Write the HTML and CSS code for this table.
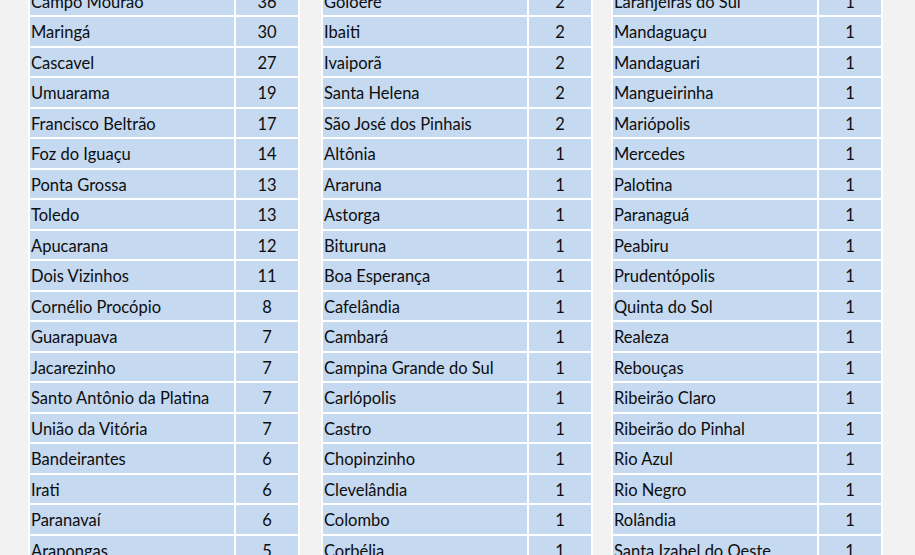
FILE: index.html
```html
<!DOCTYPE html>
<html lang="pt-BR">
<head>
<meta charset="utf-8">
<title>Municípios</title>
<link rel="stylesheet" href="styles.css">
</head>
<body>
<main class="sheet">
  <table class="grid grid-1">
    <tbody>
      <tr><td class="name">Campo Mourão</td><td class="num">36</td></tr>
      <tr><td class="name">Maringá</td><td class="num">30</td></tr>
      <tr><td class="name">Cascavel</td><td class="num">27</td></tr>
      <tr><td class="name">Umuarama</td><td class="num">19</td></tr>
      <tr><td class="name">Francisco Beltrão</td><td class="num">17</td></tr>
      <tr><td class="name">Foz do Iguaçu</td><td class="num">14</td></tr>
      <tr><td class="name">Ponta Grossa</td><td class="num">13</td></tr>
      <tr><td class="name">Toledo</td><td class="num">13</td></tr>
      <tr><td class="name">Apucarana</td><td class="num">12</td></tr>
      <tr><td class="name">Dois Vizinhos</td><td class="num">11</td></tr>
      <tr><td class="name">Cornélio Procópio</td><td class="num">8</td></tr>
      <tr><td class="name">Guarapuava</td><td class="num">7</td></tr>
      <tr><td class="name">Jacarezinho</td><td class="num">7</td></tr>
      <tr><td class="name">Santo Antônio da Platina</td><td class="num">7</td></tr>
      <tr><td class="name">União da Vitória</td><td class="num">7</td></tr>
      <tr><td class="name">Bandeirantes</td><td class="num">6</td></tr>
      <tr><td class="name">Irati</td><td class="num">6</td></tr>
      <tr><td class="name">Paranavaí</td><td class="num">6</td></tr>
      <tr><td class="name">Arapongas</td><td class="num">5</td></tr>
    </tbody>
  </table>
  <table class="grid grid-2">
    <tbody>
      <tr><td class="name">Goioerê</td><td class="num">2</td></tr>
      <tr><td class="name">Ibaiti</td><td class="num">2</td></tr>
      <tr><td class="name">Ivaiporã</td><td class="num">2</td></tr>
      <tr><td class="name">Santa Helena</td><td class="num">2</td></tr>
      <tr><td class="name">São José dos Pinhais</td><td class="num">2</td></tr>
      <tr><td class="name">Altônia</td><td class="num">1</td></tr>
      <tr><td class="name">Araruna</td><td class="num">1</td></tr>
      <tr><td class="name">Astorga</td><td class="num">1</td></tr>
      <tr><td class="name">Bituruna</td><td class="num">1</td></tr>
      <tr><td class="name">Boa Esperança</td><td class="num">1</td></tr>
      <tr><td class="name">Cafelândia</td><td class="num">1</td></tr>
      <tr><td class="name">Cambará</td><td class="num">1</td></tr>
      <tr><td class="name">Campina Grande do Sul</td><td class="num">1</td></tr>
      <tr><td class="name">Carlópolis</td><td class="num">1</td></tr>
      <tr><td class="name">Castro</td><td class="num">1</td></tr>
      <tr><td class="name">Chopinzinho</td><td class="num">1</td></tr>
      <tr><td class="name">Clevelândia</td><td class="num">1</td></tr>
      <tr><td class="name">Colombo</td><td class="num">1</td></tr>
      <tr><td class="name">Corbélia</td><td class="num">1</td></tr>
    </tbody>
  </table>
  <table class="grid grid-3">
    <tbody>
      <tr><td class="name">Laranjeiras do Sul</td><td class="num">1</td></tr>
      <tr><td class="name">Mandaguaçu</td><td class="num">1</td></tr>
      <tr><td class="name">Mandaguari</td><td class="num">1</td></tr>
      <tr><td class="name">Mangueirinha</td><td class="num">1</td></tr>
      <tr><td class="name">Mariópolis</td><td class="num">1</td></tr>
      <tr><td class="name">Mercedes</td><td class="num">1</td></tr>
      <tr><td class="name">Palotina</td><td class="num">1</td></tr>
      <tr><td class="name">Paranaguá</td><td class="num">1</td></tr>
      <tr><td class="name">Peabiru</td><td class="num">1</td></tr>
      <tr><td class="name">Prudentópolis</td><td class="num">1</td></tr>
      <tr><td class="name">Quinta do Sol</td><td class="num">1</td></tr>
      <tr><td class="name">Realeza</td><td class="num">1</td></tr>
      <tr><td class="name">Rebouças</td><td class="num">1</td></tr>
      <tr><td class="name">Ribeirão Claro</td><td class="num">1</td></tr>
      <tr><td class="name">Ribeirão do Pinhal</td><td class="num">1</td></tr>
      <tr><td class="name">Rio Azul</td><td class="num">1</td></tr>
      <tr><td class="name">Rio Negro</td><td class="num">1</td></tr>
      <tr><td class="name">Rolândia</td><td class="num">1</td></tr>
      <tr><td class="name">Santa Izabel do Oeste</td><td class="num">1</td></tr>
    </tbody>
  </table>
</main>
</body>
</html>
```

FILE: styles.css
```css
html, body {
  margin: 0;
  padding: 0;
  background: #f2f2f2;
  overflow: hidden;
}

body {
  width: 915px;
  height: 555px;
  font-family: Lato, "Open Sans", "Liberation Sans", sans-serif;
  color: #0d0d0d;
}

.sheet {
  display: flex;
  align-items: flex-start;
  padding-left: 28px;
  margin-top: -15.5px;
}

.grid {
  border-collapse: separate;
  border-spacing: 2px;
  background: #ffffff;
  table-layout: fixed;
  width: 272px;
  flex: none;
}

.grid-2 { margin-left: 21px; }
.grid-3 { margin-left: 18px; }

.grid td {
  background: #c5d9f1;
  height: 28.5px;
  box-sizing: border-box;
  padding: 2px 0 0 0;
  font-size: 16.5px;
  line-height: 26.5px;
  white-space: nowrap;
  overflow: hidden;
  vertical-align: middle;
}

.grid .name {
  width: 204px;
  padding-left: 1px;
}

.grid .num {
  width: 62px;
  text-align: center;
}
```
